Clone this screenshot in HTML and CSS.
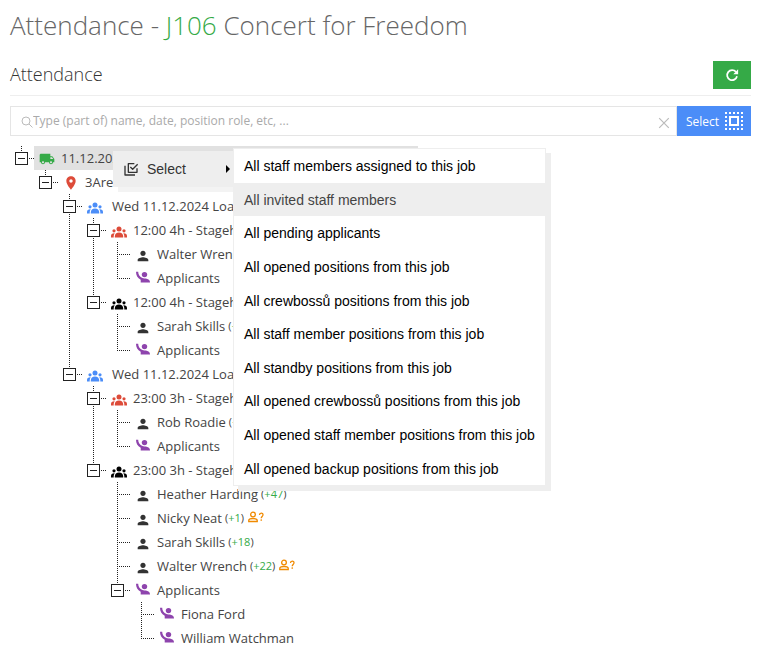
FILE: index.html
```
<!doctype html>
<html lang="en">
<head>
<meta charset="UTF-8">
<meta name="viewport" content="width=device-width, initial-scale=1">
<title>Attendance - J106 Concert for Freedom</title>
<link rel="stylesheet" href="styles.css">
</head>
<body>
<svg class="sprite" aria-hidden="true">
<symbol id="truck" viewBox="0 0 24 24"><path d="M20 8h-3V4H3c-1.100 0-2 .9-2 2v11h2c0 1.660 1.340 3 3 3s3-1.340 3-3h6c0 1.660 1.340 3 3 3s3-1.340 3-3h2v-5l-3-4zM6 18.500c-.83 0-1.500-.67-1.500-1.500s.67-1.500 1.500-1.500 1.500.67 1.500 1.500-.67 1.500-1.500 1.500zm13.500-9l1.960 2.500H17V9.500h2.500zm-1.500 9c-.83 0-1.500-.67-1.500-1.500s.67-1.500 1.500-1.500 1.500.67 1.500 1.500-.67 1.500-1.500 1.500z"/></symbol>
<symbol id="pin" viewBox="0 0 24 24"><path d="M12 2C8.130 2 5 5.130 5 9c0 5.250 7 13 7 13s7-7.750 7-13c0-3.870-3.130-7-7-7zm0 9.500c-1.380 0-2.500-1.120-2.500-2.500s1.120-2.500 2.500-2.500 2.500 1.120 2.500 2.500-1.120 2.500-2.500 2.500z"/></symbol>
<symbol id="groups" viewBox="0 0 16 16"><circle cx="8" cy="6" r="2.500"/><circle cx="3" cy="7.800" r="1.600"/><circle cx="13" cy="7.800" r="1.600"/><path d="M3.800 14.500v-1.300c0-2.200 1.700-3.700 4.200-3.700s4.200 1.500 4.200 3.700v1.300zM0 14.500v-1.600c0-1.600 1.300-2.700 3.700-2.600-.7.900-1 1.800-1 2.900v1.300zM16 14.500v-1.600c0-1.600-1.300-2.700-3.700-2.600.7.900 1 1.800 1 2.900v1.300z"/></symbol>
<symbol id="person" viewBox="0 0 24 24"><path d="M12 12c2.210 0 4-1.790 4-4s-1.790-4-4-4-4 1.790-4 4 1.790 4 4 4zm0 2c-2.670 0-8 1.340-8 4v2h16v-2c0-2.660-5.330-4-8-4z"/></symbol>
<symbol id="hand" viewBox="0 0 14 12"><circle cx="8.500" cy="3.600" r="2.700"/><path d="M0 .7h2.200c0 2.800 1.500 5 4.300 6.400 1 .5 3 .4 4.800.8 1.800.5 2.700 1.400 2.700 3.600H4.700V8.700C1.500 7.200 0 4.200 0 .7z"/></symbol>
<symbol id="ask" viewBox="0 0 32 24"><g fill="none" stroke="currentColor" stroke-width="2.600"><circle cx="10" cy="7" r="4.700"/><path d="M1.500 21v-2c0-2.500 5-4 8.500-4s8.500 1.500 8.500 4v2z"/><path d="M23 8c0-5 7-5 7-.5 0 3.500-3.500 3.500-3.500 7"/></g><circle cx="26.500" cy="18" r="1.700"/></symbol>
</svg>

<header>
<h1>Attendance - <a href="#job">J106</a> Concert for Freedom</h1>
<div class="subhead">
<h2>Attendance</h2>
<button class="refresh" aria-label="Refresh"><svg viewBox="0 0 16 16"><path d="M12.500 4.500A5.700 5.700 0 1 0 13.700 9.500" fill="none" stroke="currentColor" stroke-width="2"/><path d="M15 1.500v5.500H9.500z"/></svg></button>
</div>
</header>

<main>
<div class="search">
<div class="search-box">
<svg class="lens" viewBox="0 0 12 12"><circle cx="5" cy="5" r="4"/><path d="M8 8l3.500 3.500"/></svg>
<input type="text" placeholder="Type (part of) name, date, position role, etc, ..." aria-label="Search">
<button class="clear" aria-label="Clear"><svg viewBox="0 0 10 10"><path d="M1 1l8 8M9 1l-8 8"/></svg></button>
</div>
<button class="select">Select <svg viewBox="0 0 18 18"><g fill="none" stroke="currentColor" stroke-width="2"><path d="M5 5h8v8H5z"/><path d="M0 1h18M0 17h18M1 0v18M17 0v18" stroke-dasharray="2 2"/></g></svg></button>
</div>

<div class="tree-wrap">
<ul class="tree">
<li>
<div class="row"><button class="toggle" aria-label="Collapse"></button><span class="label selected"><svg class="icon green"><use href="#truck"/></svg>11.12.2024</span></div>
<ul>
<li>
<div class="row"><button class="toggle" aria-label="Collapse"></button><span class="label"><svg class="icon red"><use href="#pin"/></svg>3Arena</span></div>
<ul>
<li>
<div class="row"><button class="toggle" aria-label="Collapse"></button><span class="label shift"><svg class="icon blue"><use href="#groups"/></svg>Wed 11.12.2024 Load</span></div>
<ul>
<li>
<div class="row"><button class="toggle" aria-label="Collapse"></button><span class="label"><svg class="icon red"><use href="#groups"/></svg>12:00 4h - Stagehand</span></div>
<ul>
<li><div class="row"><span class="branch"></span><span class="label"><svg class="icon person"><use href="#person"/></svg>Walter Wrench</span></div></li>
<li><div class="row"><span class="branch"></span><span class="label"><svg class="icon hand"><use href="#hand"/></svg>Applicants</span></div></li>
</ul>
</li>
<li>
<div class="row"><button class="toggle" aria-label="Collapse"></button><span class="label"><svg class="icon black"><use href="#groups"/></svg>12:00 4h - Stagehand</span></div>
<ul>
<li><div class="row"><span class="branch"></span><span class="label"><svg class="icon person"><use href="#person"/></svg>Sarah Skills <small>(<b>+18</b>)</small></span></div></li>
<li><div class="row"><span class="branch"></span><span class="label"><svg class="icon hand"><use href="#hand"/></svg>Applicants</span></div></li>
</ul>
</li>
</ul>
</li>
<li>
<div class="row"><button class="toggle" aria-label="Collapse"></button><span class="label shift"><svg class="icon blue"><use href="#groups"/></svg>Wed 11.12.2024 Load</span></div>
<ul>
<li>
<div class="row"><button class="toggle" aria-label="Collapse"></button><span class="label"><svg class="icon red"><use href="#groups"/></svg>23:00 3h - Stagehand</span></div>
<ul>
<li><div class="row"><span class="branch"></span><span class="label"><svg class="icon person"><use href="#person"/></svg>Rob Roadie <small>(<b>+1</b>)</small></span></div></li>
<li><div class="row"><span class="branch"></span><span class="label"><svg class="icon hand"><use href="#hand"/></svg>Applicants</span></div></li>
</ul>
</li>
<li>
<div class="row"><button class="toggle" aria-label="Collapse"></button><span class="label"><svg class="icon black"><use href="#groups"/></svg>23:00 3h - Stagehand</span></div>
<ul>
<li><div class="row"><span class="branch"></span><span class="label"><svg class="icon person"><use href="#person"/></svg>Heather Harding <small>(<b>+47</b>)</small></span></div></li>
<li><div class="row"><span class="branch"></span><span class="label"><svg class="icon person"><use href="#person"/></svg>Nicky Neat <small>(<b>+1</b>)</small> <svg class="ask"><use href="#ask"/></svg></span></div></li>
<li><div class="row"><span class="branch"></span><span class="label"><svg class="icon person"><use href="#person"/></svg>Sarah Skills <small>(<b>+18</b>)</small></span></div></li>
<li><div class="row"><span class="branch"></span><span class="label"><svg class="icon person"><use href="#person"/></svg>Walter Wrench <small>(<b>+22</b>)</small> <svg class="ask"><use href="#ask"/></svg></span></div></li>
<li>
<div class="row"><button class="toggle" aria-label="Collapse"></button><span class="label"><svg class="icon hand"><use href="#hand"/></svg>Applicants</span></div>
<ul>
<li><div class="row"><span class="branch"></span><span class="label"><svg class="icon hand"><use href="#hand"/></svg>Fiona Ford</span></div></li>
<li><div class="row"><span class="branch"></span><span class="label"><svg class="icon hand"><use href="#hand"/></svg>William Watchman</span></div></li>
</ul>
</li>
</ul>
</li>
</ul>
</li>
</ul>
</li>
</ul>
</li>
</ul>

<div class="context-menu">
<button class="context-item"><svg viewBox="0 0 24 24"><path d="M21 11v6H8V4h9M3 7v14h15M11 9l3.500 3.500L22 5"/></svg>Select<i class="arrow"></i></button>
<div class="submenu">
<button>All staff members assigned to this job</button>
<button class="active">All invited staff members</button>
<button>All pending applicants</button>
<button>All opened positions from this job</button>
<button>All crewbossů positions from this job</button>
<button>All staff member positions from this job</button>
<button>All standby positions from this job</button>
<button>All opened crewbossů positions from this job</button>
<button>All opened staff member positions from this job</button>
<button>All opened backup positions from this job</button>
</div>
</div>
</div>
</main>

<script>
document.querySelectorAll('.toggle').forEach(function (el) {
	el.onclick = function () {
		let list = el.closest('li').querySelector('ul');
		list.hidden = !list.hidden;
		el.classList.toggle('closed', list.hidden);
	};
});
document.querySelector('.clear').onclick = function () {
	document.querySelector('.search input').value = '';
};
</script>
</body>
</html>
```
FILE: styles.css
```
*, *::before {
	box-sizing: border-box;
}

body {
	margin: 0;
	padding: 0 30px 10px 10px;
	font-family: "Open Sans", sans-serif;
	font-size: 13px;
	color: #444;
	background: #fff;
}

button, input {
	font: inherit;
	color: inherit;
	border: 0;
	padding: 0;
	background: none;
}

svg {
	fill: currentColor;
	flex: none;
}

.sprite {
	display: none;
}

h1 {
	margin: 0;
	padding-top: 5px;
	font-size: 26px;
	line-height: 40px;
	font-weight: 300;
	color: #666;
}

h1 a {
	color: #35aa47;
	text-decoration: none;
}

.subhead {
	display: flex;
	align-items: center;
	justify-content: space-between;
	height: 51px;
	padding-top: 9px;
	border-bottom: 1px solid #eee;
}

h2 {
	margin: 0 0 2px;
	font-size: 18px;
	font-weight: 300;
	color: #333;
}

.refresh {
	width: 38px;
	height: 28px;
	color: #fff;
	background: #35aa47;
}

.refresh svg {
	display: block;
	width: 14px;
	height: 14px;
	margin: 0 auto;
}

/* search bar */
.search {
	display: flex;
	height: 30px;
	margin-top: 10px;
}

.search-box {
	flex: 1;
	display: flex;
	align-items: center;
	padding: 0 6px 0 10px;
	border: 1px solid #e5e5e5;
	color: #bbb;
}

.search-box input {
	flex: 1;
	min-width: 0;
	outline: 0;
	color: #444;
	font-size: 12px;
	line-height: 18px;
}

.search-box input::placeholder {
	color: #aaa;
}

.search-box svg {
	display: block;
	width: 12px;
	height: 12px;
	fill: none;
	stroke: currentColor;
}

.search-box .lens {
	margin-top: 2px;
}

.search-box .clear svg {
	margin-top: 3px;
}

.select {
	display: flex;
	align-items: center;
	gap: 6px;
	padding: 0 8px 0 9px;
	font-size: 12px;
	color: #fff;
	background: #4b8df8;
}

.select svg {
	width: 18px;
	height: 18px;
}

/* tree */
.tree-wrap {
	position: relative;
	margin-top: 10px;
}

.tree, .tree ul {
	list-style: none;
	margin: 0;
	padding: 0;
}

.tree ul {
	padding-left: 24px;
}

.tree li {
	background: repeating-linear-gradient(#222 0 1px, transparent 1px 2px) 11px 0 / 1px 100% no-repeat;
}

.tree li:last-child {
	background-size: 1px 12px;
}

.row {
	display: flex;
	height: 24px;
	line-height: 24px;
	white-space: nowrap;
}

.toggle, .branch {
	flex: none;
	width: 24px;
	height: 24px;
	background: repeating-linear-gradient(90deg, #222 0 1px, transparent 1px 2px) 11px 12px / 13px 1px no-repeat;
}

.toggle {
	display: flex;
	align-items: flex-start;
	padding: 6px 0 0 5px;
}

.toggle::before {
	content: "";
	flex: none;
	width: 13px;
	height: 13px;
	border: 1px solid #222;
	background: linear-gradient(#222, #222) center / 7px 1px no-repeat #fff;
}

.toggle.closed::before {
	background: linear-gradient(#222, #222) center / 7px 1px no-repeat, linear-gradient(#222, #222) center / 1px 7px no-repeat #fff;
}

.label {
	display: flex;
	align-items: center;
	padding-left: 5px;
}

.selected {
	width: 384px;
	background: #e1e1e1;
}

.icon {
	width: 16px;
	height: 16px;
	margin: 2px 6px 0 0;
}

.shift .icon {
	margin-right: 9px;
}

.person {
	margin-top: 4px;
	color: #333;
}

.hand {
	width: 14px;
	height: 12px;
	margin: 0 7px 2px 1px;
	color: #8e44ad;
}

.green { color: #35aa47; }
.red { color: #dd4b39; }
.blue { color: #4b8df8; }
.black { color: #000; }

.label small {
	margin-left: 3px;
	font-size: 11px;
}

.label b {
	font-weight: 400;
	color: #35aa47;
}

.ask {
	width: 16px;
	height: 12px;
	margin: 0 0 2px 4px;
	color: #f08a00;
}

/* menu over the tree */
.context-menu {
	position: absolute;
	top: 2px;
	left: 103px;
	display: flex;
	align-items: flex-start;
	font-family: "Liberation Sans", Arial, sans-serif;
	font-size: 14px;
}

.context-item {
	display: flex;
	align-items: center;
	width: 120px;
	height: 36px;
	margin-top: 3px;
	padding: 0 3px 0 10px;
	color: #333;
	background: #eee;
	box-shadow: 5px 5px 0 #f3f3f3;
}

.context-item svg {
	width: 16px;
	height: 16px;
	margin-right: 8px;
	fill: none;
	stroke: currentColor;
	stroke-width: 2;
	stroke-linejoin: round;
}

.arrow {
	margin-left: auto;
	border: 4px solid transparent;
	border-left-color: #000;
	border-right: 0;
}

.submenu {
	position: relative;
	display: flex;
	flex-direction: column;
	height: 338px;
	border: 1px solid #eee;
	background: #fff;
	box-shadow: 5px 5px 0 #eee;
}

.submenu button {
	flex: 1;
	padding: 1px 10px 0;
	color: #000;
	text-align: left;
	white-space: nowrap;
}

.submenu .active, .submenu button:hover {
	color: #444;
	background: #eee;
}
```
